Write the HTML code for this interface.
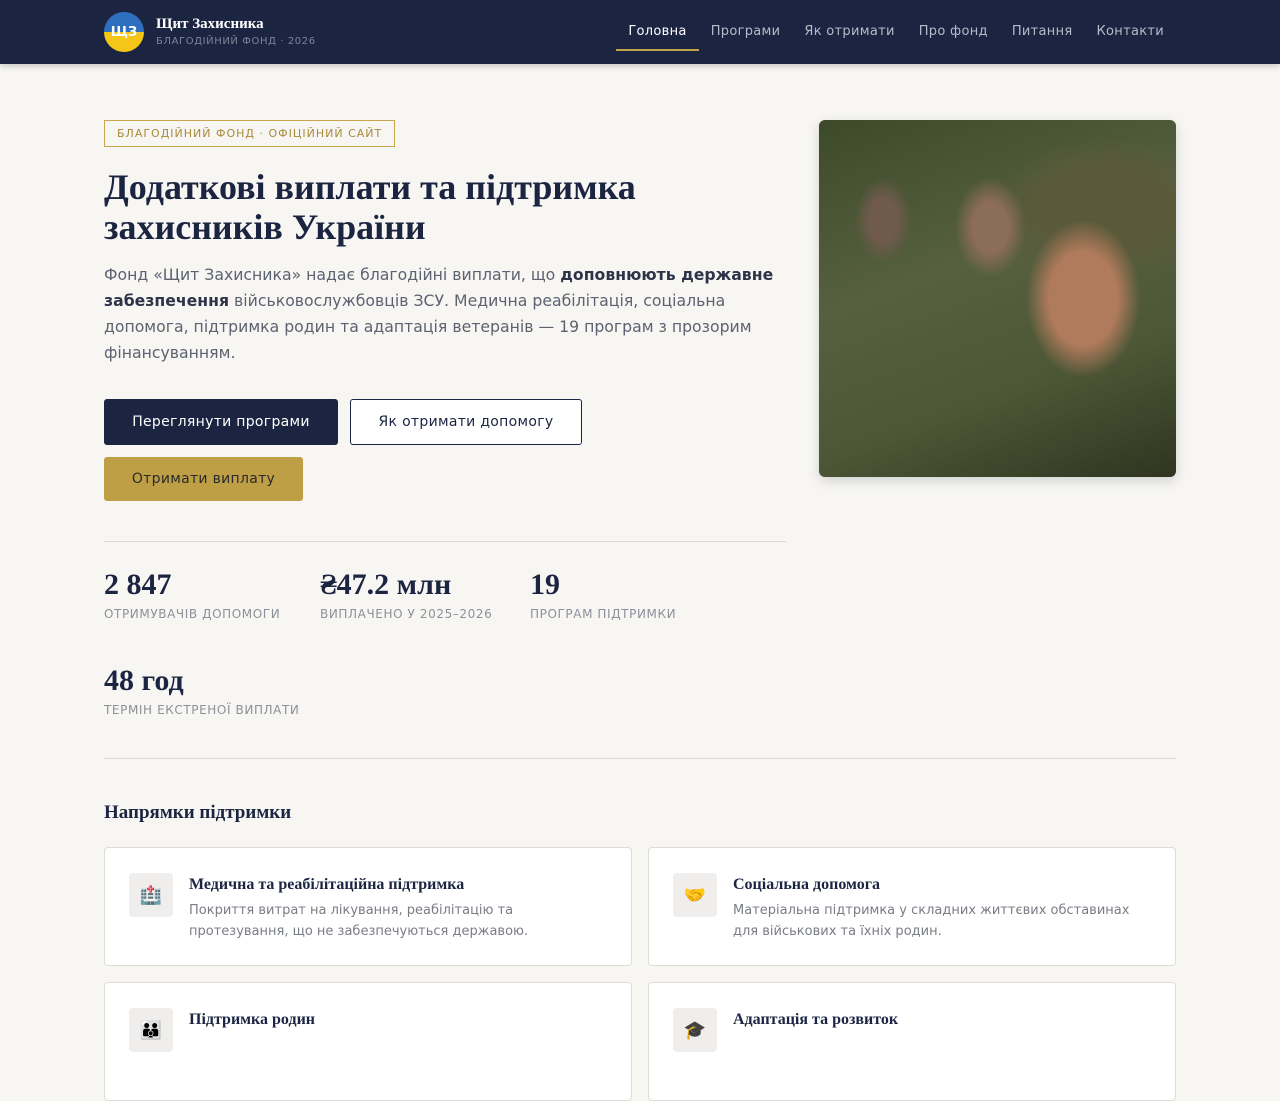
<!DOCTYPE html>
<html><head><meta charset="utf-8"><style>
*{box-sizing:border-box;margin:0;padding:0}
body{width:1280px;height:1024px;overflow:hidden;background:#f7f6f3;font-family:"DejaVu Sans","Liberation Sans",sans-serif;color:#1b2540;position:relative}
.nav{height:64px;background:#1b2541;position:relative;box-shadow:0 2px 6px rgba(0,0,0,.2)}
.logo{position:absolute;left:104px;top:12px;width:40px;height:40px;border-radius:50%;background:linear-gradient(#2f6fc0 50%,#f5c518 50%);color:#fff;font:bold 13px "DejaVu Sans",sans-serif;display:flex;align-items:center;justify-content:center}
.brand{position:absolute;left:156px;top:16px;color:#fff;font:bold 15px "Liberation Serif",serif}
.sub{position:absolute;left:156px;top:36px;color:#7c8499;font-size:10px;letter-spacing:.6px}
.menu{position:absolute;right:104px;top:2px;display:flex;height:62px}
.menu a{color:#b5bbc9;font-size:13px;padding:0 12px;line-height:60px;letter-spacing:.3px;text-decoration:none}
.menu a.on{color:#fff;position:relative}
.menu a.on:after{content:"";position:absolute;left:0;right:0;top:47px;height:2px;background:#c3a24a}
.tag{position:absolute;left:104px;top:120px;border:1px solid #c9a64e;color:#a98a3a;font-size:11px;letter-spacing:1px;padding:6px 12px}
h1{position:absolute;left:104px;top:167px;font:bold 36px/40px "Liberation Serif",serif;color:#1b2541;width:700px}
.lead{position:absolute;left:104px;top:262px;width:690px;font-size:15.7px;line-height:26px;color:#5d6270}
.lead b{color:#2d3448}
.btn{position:absolute;height:46px;font-size:14px;display:flex;align-items:center;justify-content:center;border-radius:3px;letter-spacing:.3px}
.photo{position:absolute;left:819px;top:120px;width:357px;height:357px;border-radius:6px;overflow:hidden;background:radial-gradient(ellipse 16% 22% at 74% 50%,#b07a5c 0 60%,transparent 100%),radial-gradient(ellipse 10% 14% at 48% 30%,#8c6c5a 0 50%,transparent 100%),radial-gradient(ellipse 8% 12% at 18% 28%,#6f5a4c 0 50%,transparent 100%),radial-gradient(ellipse 30% 20% at 80% 25%,#5a5a3a 0 60%,transparent 100%),linear-gradient(160deg,#3d4a2a,#56603f 40%,#4d5736 70%,#2f3520);box-shadow:0 4px 12px rgba(0,0,0,.15)}
.hr{position:absolute;height:1px;background:#dcdad5}
.num{position:absolute;font:bold 30px "Liberation Serif",serif;color:#1b2541}
.lbl{position:absolute;font-size:12px;letter-spacing:.6px;color:#8c909a}
h2{position:absolute;left:104px;top:802px;font:bold 19px "Liberation Serif",serif;color:#1b2541}
.card{position:absolute;width:528px;height:119px;background:#fff;border:1px solid #dedcd7;border-radius:4px}
.ic{position:absolute;left:24px;top:25px;width:44px;height:44px;background:#efeeec;border-radius:4px;display:flex;align-items:center;justify-content:center;font-size:18px}
.ct{position:absolute;left:84px;top:28px;font:bold 16px "Liberation Serif",serif;color:#1b2541}
.cd{position:absolute;left:84px;top:52px;width:400px;font-size:13px;line-height:21px;color:#7a7d85}
</style></head><body>
<div class="nav"><div class="logo">ЩЗ</div><div class="brand">Щит Захисника</div><div class="sub">БЛАГОДІЙНИЙ ФОНД · 2026</div>
<div class="menu"><a class="on">Головна</a><a>Програми</a><a>Як отримати</a><a>Про фонд</a><a>Питання</a><a>Контакти</a></div></div>
<div class="tag">БЛАГОДІЙНИЙ ФОНД · ОФІЦІЙНИЙ САЙТ</div>
<h1>Додаткові виплати та підтримка захисників України</h1>
<div class="lead">Фонд «Щит Захисника» надає благодійні виплати, що <b>доповнюють державне забезпечення</b> військовослужбовців ЗСУ. Медична реабілітація, соціальна допомога, підтримка родин та адаптація ветеранів — 19 програм з прозорим фінансуванням.</div>
<div class="btn" style="left:104px;top:399px;width:234px;background:#1b2541;color:#fff">Переглянути програми</div>
<div class="btn" style="left:350px;top:399px;width:232px;border:1px solid #1b2541;color:#1b2541;background:#fff">Як отримати допомогу</div>
<div class="btn" style="left:104px;top:457px;width:199px;height:44px;background:#bf9f45;color:#2a2a2a">Отримати виплату</div>
<div class="photo"></div>
<div class="hr" style="left:104px;top:541px;width:682px"></div>
<div class="num" style="left:104px;top:568px">2 847</div><div class="lbl" style="left:104px;top:607px">ОТРИМУВАЧІВ ДОПОМОГИ</div>
<div class="num" style="left:320px;top:568px">₴47.2 млн</div><div class="lbl" style="left:320px;top:607px">ВИПЛАЧЕНО У 2025–2026</div>
<div class="num" style="left:530px;top:568px">19</div><div class="lbl" style="left:530px;top:607px">ПРОГРАМ ПІДТРИМКИ</div>
<div class="num" style="left:104px;top:664px">48 год</div><div class="lbl" style="left:104px;top:703px">ТЕРМІН ЕКСТРЕНОЇ ВИПЛАТИ</div>
<div class="hr" style="left:104px;top:758px;width:1072px"></div>
<h2>Напрямки підтримки</h2>
<div class="card" style="left:104px;top:847px"><div class="ic">🏥</div><div class="ct">Медична та реабілітаційна підтримка</div><div class="cd">Покриття витрат на лікування, реабілітацію та протезування, що не забезпечуються державою.</div></div>
<div class="card" style="left:648px;top:847px"><div class="ic">🤝</div><div class="ct">Соціальна допомога</div><div class="cd" style="width:420px">Матеріальна підтримка у складних життєвих обставинах для військових та їхніх родин.</div></div>
<div class="card" style="left:104px;top:982px"><div class="ic">👪</div><div class="ct">Підтримка родин</div></div>
<div class="card" style="left:648px;top:982px"><div class="ic">🎓</div><div class="ct">Адаптація та розвиток</div></div>
</body></html>
